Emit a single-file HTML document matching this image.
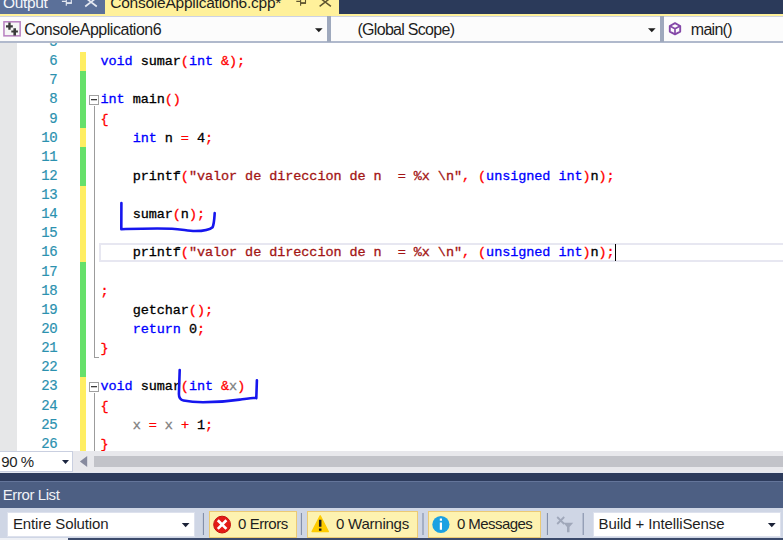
<!DOCTYPE html>
<html><head><meta charset="utf-8"><title>ConsoleApplication6</title>
<style>
html,body{margin:0;padding:0;overflow:hidden;}
body{width:783px;height:540px;position:relative;overflow:hidden;background:#fff;font-family:"Liberation Sans",sans-serif;}
.abs{position:absolute;}
.ui{position:absolute;font-family:"Liberation Sans",sans-serif;font-size:15px;line-height:20px;white-space:pre;color:#1e1e1e;}
.code{position:absolute;left:100.5px;font-family:"Liberation Mono",monospace;font-size:13.5px;letter-spacing:-0.07px;line-height:19px;height:19px;white-space:pre;color:#000;-webkit-text-stroke:0.3px currentColor;}
.ln{position:absolute;left:23.8px;width:33.5px;text-align:right;font-family:"Liberation Mono",monospace;font-size:14px;letter-spacing:-0.37px;line-height:19px;height:19px;white-space:pre;color:#2b91af;-webkit-text-stroke:0.2px currentColor;}
.k{color:#0000ff}.p{color:#ff0000}.s{color:#a31515}.g{color:#808080}.b{color:#000}
.cb{position:absolute;left:80px;width:6px;}
.y{background:#ffee62}.gr{background:#66e06a}
</style></head><body>
<div id="root" style="position:absolute;left:0;top:0;width:783px;height:540px;overflow:hidden;background:#fff">

<div class="abs" style="left:0;top:42px;width:17px;height:409px;background:#e6e7e8"></div>
<div class="cb y" style="top:51.68px;height:19.13px"></div>
<div class="cb gr" style="top:70.81px;height:57.39px"></div>
<div class="cb y" style="top:128.20px;height:19.13px"></div>
<div class="cb gr" style="top:147.33px;height:38.26px"></div>
<div class="cb y" style="top:185.59px;height:76.52px"></div>
<div class="cb gr" style="top:262.11px;height:114.78px"></div>
<div class="cb y" style="top:376.89px;height:74.11px"></div>
<div class="abs" style="left:99.2px;top:243.1px;width:700px;height:18.8px;background:#e7e7f1"></div><div class="abs" style="left:100.8px;top:244.8px;width:700px;height:15.2px;background:#fff"></div>
<div class="abs" style="left:93.9px;top:106px;width:1.2px;height:251.5px;background:#9c9c9c"></div>
<div class="abs" style="left:93.9px;top:356.8px;width:5.4px;height:1.1px;background:#9c9c9c"></div>
<div class="abs" style="left:93.9px;top:392.8px;width:1.2px;height:58.2px;background:#9c9c9c"></div>
<div class="abs" style="left:89px;top:95.14px;width:8px;height:8px;border:1px solid #a0a0a0;background:#fff"><div class="abs" style="left:1px;top:3px;width:6px;height:1px;background:#3c3c3c;box-shadow:0 1px 0 rgba(60,60,60,0.3)"></div></div>
<div class="abs" style="left:89px;top:382.09px;width:8px;height:8px;border:1px solid #a0a0a0;background:#fff"><div class="abs" style="left:1px;top:3px;width:6px;height:1px;background:#3c3c3c;box-shadow:0 1px 0 rgba(60,60,60,0.3)"></div></div>
<div class="ln" style="top:33.00px">5</div>
<div class="ln" style="top:52.00px">6</div>
<div class="code" style="top:52.00px"><span class="k">void</span><span class="b"> sumar</span><span class="p">(</span><span class="k">int</span><span class="b"> </span><span class="p">&amp;);</span></div>
<div class="ln" style="top:71.00px">7</div>
<div class="ln" style="top:90.00px">8</div>
<div class="code" style="top:90.00px"><span class="k">int</span><span class="b"> main</span><span class="p">()</span></div>
<div class="ln" style="top:110.00px">9</div>
<div class="code" style="top:110.00px"><span class="p">{</span></div>
<div class="ln" style="top:129.00px">10</div>
<div class="code" style="top:129.00px"><span class="b">    </span><span class="k">int</span><span class="b"> n </span><span class="p">=</span><span class="b"> 4</span><span class="p">;</span></div>
<div class="ln" style="top:148.00px">11</div>
<div class="ln" style="top:167.00px">12</div>
<div class="code" style="top:167.00px"><span class="b">    printf</span><span class="p">(</span><span class="s">&quot;valor de direccion de n  = %x \n&quot;</span><span class="p">,</span><span class="b"> </span><span class="p">(</span><span class="k">unsigned int</span><span class="p">)</span><span class="b">n</span><span class="p">);</span></div>
<div class="ln" style="top:186.00px">13</div>
<div class="ln" style="top:205.00px">14</div>
<div class="code" style="top:205.00px"><span class="b">    sumar</span><span class="p">(</span><span class="b">n</span><span class="p">);</span></div>
<div class="ln" style="top:224.00px">15</div>
<div class="ln" style="top:243.00px">16</div>
<div class="code" style="top:243.00px"><span class="b">    printf</span><span class="p">(</span><span class="s">&quot;valor de direccion de n  = %x \n&quot;</span><span class="p">,</span><span class="b"> </span><span class="p">(</span><span class="k">unsigned int</span><span class="p">)</span><span class="b">n</span><span class="p">);</span></div>
<div class="ln" style="top:263.00px">17</div>
<div class="ln" style="top:282.00px">18</div>
<div class="code" style="top:282.00px"><span class="p">;</span></div>
<div class="ln" style="top:301.00px">19</div>
<div class="code" style="top:301.00px"><span class="b">    getchar</span><span class="p">();</span></div>
<div class="ln" style="top:320.00px">20</div>
<div class="code" style="top:320.00px"><span class="b">    </span><span class="k">return</span><span class="b"> 0</span><span class="p">;</span></div>
<div class="ln" style="top:339.00px">21</div>
<div class="code" style="top:339.00px"><span class="p">}</span></div>
<div class="ln" style="top:358.00px">22</div>
<div class="ln" style="top:377.00px">23</div>
<div class="code" style="top:377.00px"><span class="k">void</span><span class="b"> sumar</span><span class="p">(</span><span class="k">int</span><span class="b"> </span><span class="p">&amp;</span><span class="g">x</span><span class="p">)</span></div>
<div class="ln" style="top:397.00px">24</div>
<div class="code" style="top:397.00px"><span class="p">{</span></div>
<div class="ln" style="top:416.00px">25</div>
<div class="code" style="top:416.00px"><span class="b">    </span><span class="g">x</span><span class="b"> </span><span class="p">=</span><span class="b"> </span><span class="g">x</span><span class="b"> </span><span class="p">+</span><span class="b"> 1</span><span class="p">;</span></div>
<div class="ln" style="top:435.00px">26</div>
<div class="code" style="top:435.00px"><span class="p">}</span></div>
<div class="abs" style="left:615px;top:243.5px;width:1px;height:17.5px;background:#000"></div>
<svg class="abs" style="left:0;top:0" width="783" height="540" viewBox="0 0 783 540" fill="none" stroke="#1616ee" stroke-width="2.6" stroke-linecap="round" stroke-linejoin="round">
<path d="M121.4 203 L121.3 229.2 C135 228.8 150 228.2 172 228.7 C182 229.2 188 231 195 231 C202 231 209 230.6 212.6 227.2 C214.3 223 214.4 217 214.7 213"/>
<path d="M179.7 370 L178.9 394 C178.9 398 180.5 399.9 183.5 400.5 C190 401.9 196 402.3 203 402.3 C215 402.3 228 401.4 239.7 399.6 C246 398.7 251 397.9 255.6 397.7 L256.3 398.2 L256.9 380.2"/>
</svg>
<div class="abs" style="left:0;top:0;width:783px;height:42px;background:#fcfcfc"></div>
<div class="abs" style="left:0;top:0;width:783px;height:13.5px;background:#2b3a5a"></div>
<div class="abs" style="left:0;top:0;width:105px;height:13.5px;background:#5b7099"></div>
<div class="abs" style="left:104.8px;top:0;width:234.5px;height:13.6px;background:#fff19b"></div>
<div class="abs" style="left:0;top:13.5px;width:783px;height:2.5px;background:#fff19b"></div>
<div class="abs" style="left:0;top:16px;width:783px;height:0.9px;background:#cdd3e4"></div>
<div class="ui" id="t_out" style="left:3.00px;top:-6.67px;font-size:15.5px;letter-spacing:-0.346px;color:#f4f6fa">Output</div>
<div class="ui" id="t_tab" style="left:110.20px;top:-6.67px;font-size:15.5px;letter-spacing:-0.237px;color:#1e1e1e">ConsoleApplication6.cpp*</div>
<svg class="abs" style="left:0;top:0" width="783" height="14" viewBox="0 0 783 14" fill="none">
<g stroke="#e4e8f1"><path d="M61.9 1.4 H66.3 M66.3 -2 V5.7 M66.3 -2 H71.3 V3 H66.3" stroke-width="1.1"/><path d="M66.3 3.1 H71.8" stroke-width="1.6"/><path d="M85.2 6.5 L94.9 -1 M96.8 6.5 L87.1 -1" stroke-width="1.7"/></g>
<g stroke="#5e5430"><path d="M296.3 1.4 H300.6 M300.6 -2 V5.7 M300.6 -2 H305.5 V3 H300.6" stroke-width="1.1"/><path d="M300.6 3.1 H306" stroke-width="1.6"/><path d="M319.6 6.4 L329.2 -1 M330.9 6.4 L321.3 -1" stroke-width="1.5"/></g>
</svg>
<div class="abs" style="left:0;top:41.1px;width:783px;height:1.5px;background:#b0b9cc"></div>
<div class="abs" style="left:326.8px;top:16px;width:4.3px;height:25.5px;background:#9fa9bd"></div>
<div class="abs" style="left:659.9px;top:16px;width:4.4px;height:25.5px;background:#9fa9bd"></div>
<div class="ui" id="n1" style="left:24.30px;top:19.76px;font-size:16px;letter-spacing:-0.471px;color:#1e1e1e">ConsoleApplication6</div>
<div class="ui" id="n2" style="left:357.50px;top:19.76px;font-size:16px;letter-spacing:-0.709px;color:#1e1e1e">(Global Scope)</div>
<div class="ui" id="n3" style="left:690.80px;top:19.76px;font-size:16px;letter-spacing:-0.729px;color:#1e1e1e">main()</div>
<svg class="abs" style="left:0;top:16px" width="783" height="26" viewBox="0 16 783 26">
<rect x="3.95" y="21.8" width="16.2" height="14.05" fill="#f6f6f6" stroke="#b77fc0" stroke-width="1.5"/>
<path d="M6 25.3h6.8v2.1h-6.8z M8.3 22.5h2.35v7.3h-2.35z M11.3 30.4h6.6v2.15h-6.6z M13.4 28.3h2.6v7.2h-2.6z" fill="#3a3a3a"/>
<path d="M315 28.2h7.6l-3.8 4z" fill="#1e1e1e"/>
<path d="M648 28.2h7.6l-3.8 4z" fill="#1e1e1e"/>
<g fill="none" stroke="#8549a8" stroke-width="1.9" stroke-linejoin="round"><path d="M675 23.2 L680.2 26 V31.6 L675 34.3 L669.8 31.6 V26 Z"/><path d="M669.8 26 L675 28.8 L680.2 26 M675 28.8 V34.3" stroke-width="1.7"/></g>
</svg>
<div class="abs" style="left:0;top:451px;width:783px;height:21.5px;background:#e8e8ec"></div>
<div class="abs" style="left:0;top:451px;width:73px;height:20.8px;background:#c9cfe0"></div>
<div class="abs" style="left:0;top:451.9px;width:72.1px;height:19px;background:#fff"></div>
<div class="abs" style="left:93.9px;top:456.3px;width:700px;height:10.5px;background:#c2c3c9"></div>
<div class="ui" id="z" style="left:1.30px;top:452.00px;font-size:15px;letter-spacing:-0.434px;color:#1e1e1e">90 %</div>
<div class="abs" style="left:0;top:471.7px;width:783px;height:1.5px;background:#e4e7f0"></div>
<div class="abs" style="left:0;top:473.2px;width:783px;height:8.3px;background:#2d3b5c"></div>
<div class="abs" style="left:0;top:480.7px;width:783px;height:1px;background:#64759a"></div>
<div class="abs" style="left:0;top:481.6px;width:783px;height:27px;background:#4d5f83"></div>
<div class="ui" id="el" style="left:2.80px;top:485.30px;font-size:15px;letter-spacing:-0.427px;color:#f0f2f6">Error List</div>
<div class="abs" style="left:0;top:508.4px;width:783px;height:32px;background:#cfd6e5"></div>
<div class="abs" style="left:0;top:537.6px;width:68.3px;height:3px;background:#eef0f5"></div>
<div class="abs" style="left:68.3px;top:537.9px;width:720px;height:3px;background:#3b4a6b"></div>
<div class="abs" style="left:7.8px;top:512.7px;width:186.3px;height:23.3px;background:#fff;box-shadow:0 0 0 1px #dde1ed"></div>
<div class="ui" id="es" style="left:13.00px;top:514.30px;font-size:15px;letter-spacing:-0.147px;color:#1e1e1e">Entire Solution</div>
<div class="abs" style="left:594px;top:512.7px;width:186.1px;height:23.3px;background:#fff;box-shadow:0 0 0 1px #dde1ed"></div>
<div class="ui" id="bi" style="left:598.50px;top:514.30px;font-size:15px;letter-spacing:-0.100px;color:#1e1e1e">Build + IntelliSense</div>
<div class="abs" style="left:209.3px;top:511.2px;width:87.4px;height:26.5px;background:#fdf2b0;box-sizing:border-box;border:1px solid #ecca74"></div>
<div class="ui" id="be" style="left:238.10px;top:514.30px;font-size:15px;letter-spacing:-0.463px;color:#1e1e1e">0 Errors</div>
<div class="abs" style="left:307.3px;top:511.2px;width:111.0px;height:26.5px;background:#fdf2b0;box-sizing:border-box;border:1px solid #ecca74"></div>
<div class="ui" id="bw" style="left:336.00px;top:514.30px;font-size:15px;letter-spacing:-0.235px;color:#1e1e1e">0 Warnings</div>
<div class="abs" style="left:428.3px;top:511.2px;width:113.2px;height:26.5px;background:#fdf2b0;box-sizing:border-box;border:1px solid #ecca74"></div>
<div class="ui" id="bm" style="left:457.00px;top:514.30px;font-size:15px;letter-spacing:-0.575px;color:#1e1e1e">0 Messages</div>
<svg class="abs" style="left:0;top:440px" width="783" height="100" viewBox="0 440 783 100">
<path d="M62 459.9h7l-3.5 4z" fill="#1b2540"/>
<path d="M87.2 456v11l-7.3-5.5z" fill="#868a9e"/>
<path d="M181.8 523.1h7.7l-3.85 4.1z" fill="#1b2237"/>
<path d="M767.9 523.1h7.8l-3.9 4.1z" fill="#1b2237"/>
<g stroke="#7b88a3" stroke-width="1"><path d="M203.4 513v22M301.4 513v22M423 513v22M547.4 513v22M583.2 513v22"/></g>
<circle cx="222.1" cy="524.6" r="8.4" fill="#e41b17" stroke="#c4100c" stroke-width="1"/>
<path d="M217.8 520.3l8.6 8.6M226.4 520.3l-8.6 8.6" stroke="#fff" stroke-width="2.7"/>
<path d="M320.2 515.8l8.1 15.8h-16.2z" fill="#ffcc00" stroke="#ffcc00" stroke-width="1.4" stroke-linejoin="round"/>
<path d="M320.2 519.8v7M320.2 528.4v2.3" stroke="#1e1e1e" stroke-width="2.5"/>
<circle cx="440.9" cy="524.5" r="8.6" fill="#1ba1e2"/>
<path d="M440.9 522.5v7.2M440.9 518.6v2.2" stroke="#fff" stroke-width="2.2"/>
<g stroke="#a0a8ba" stroke-width="1.8" fill="#a0a8ba"><path d="M557.2 517l7 7M564.2 517l-7 7" fill="none"/><path d="M563.3 522.8h9.9l-3.7 4.2v5.2h-2.5v-5.2z" stroke="none"/></g>
</svg>
</div>
</body></html>
